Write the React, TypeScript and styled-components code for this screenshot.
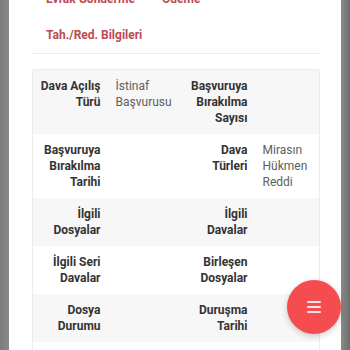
import { Fragment } from 'react';
import { createGlobalStyle, styled } from 'styled-components';

const GlobalStyle = createGlobalStyle`
  html, body {
    margin: 0;
    padding: 0;
    height: 100%;
    overflow: hidden;
    background: #7a7a7a;
    font-family: Roboto, "Liberation Sans", sans-serif;
  }
`;

type Cell = { label: string; value?: string };

const rows: [Cell, Cell][] = [
  [
    { label: 'Dava Açılış Türü', value: 'İstinaf Başvurusu' },
    { label: 'Başvuruya Bırakılma Sayısı' },
  ],
  [
    { label: 'Başvuruya Bırakılma Tarihi' },
    { label: 'Dava Türleri', value: 'Mirasın Hükmen Reddi' },
  ],
  [{ label: 'İlgili Dosyalar' }, { label: 'İlgili Davalar' }],
  [{ label: 'İlgili Seri Davalar' }, { label: 'Birleşen Dosyalar' }],
  [{ label: 'Dosya Durumu' }, { label: 'Duruşma Tarihi' }],
  [{ label: 'İlgili Kişi' }, { label: 'Ücret' }],
];

const links = ['Evrak Gönderme', 'Ödeme', 'Tah./Red. Bilgileri'];

const App = () => {
  return (
    <>
      <GlobalStyle />
      <Backdrop>
        <Modal>
          <Content>
            <LinkGrid>
              {links.map((l) => (
                <TabLink key={l}>{l}</TabLink>
              ))}
            </LinkGrid>
            <Divider />
            <InfoTable>
              <colgroup>
                <col style={{ width: 76 }} />
                <col style={{ width: 77 }} />
                <col style={{ width: 70 }} />
                <col />
              </colgroup>
              <tbody>
                {rows.map((r, i) => (
                  <Row key={i} $striped={i % 2 === 0}>
                    {r.map((c, j) => (
                      <Fragment key={j}>
                        <Label>{c.label}</Label>
                        <Value>{c.value}</Value>
                      </Fragment>
                    ))}
                  </Row>
                ))}
              </tbody>
            </InfoTable>
          </Content>
        </Modal>
        <Fab aria-label="menu">
          <MenuIcon />
        </Fab>
      </Backdrop>
    </>
  );
};

const MenuIcon = () => (
  <svg width="16" height="14" viewBox="0 0 16 14" fill="none">
    <rect x="1" y="1" width="14" height="2" rx="1" fill="#fbe3e3" />
    <rect x="1" y="6" width="14" height="2" rx="1" fill="#fbe3e3" />
    <rect x="1" y="11" width="14" height="2" rx="1" fill="#fbe3e3" />
  </svg>
);

export default App;

const Backdrop = styled.div`
  position: relative;
  height: 350px;
  padding: 0 9px;
  box-sizing: border-box;
  background: linear-gradient(to right, #7c7c7c 0, #8a8a8a 9px, #8a8a8a 341px, #6e6e6e 350px);
`;

const Modal = styled.div`
  background: #ffffff;
  height: 100%;
  overflow: hidden;
`;

const Content = styled.div`
  margin-top: -19px;
  padding: 0 21px 0 23px;
`;

const LinkGrid = styled.div`
  display: grid;
  grid-template-columns: 116px 116px;
  row-gap: 20px;
  padding: 10px 0 10px 14px;
`;

const TabLink = styled.a`
  font-size: 12px;
  font-weight: 700;
  line-height: 16px;
  color: #bc4a53;
  white-space: nowrap;
`;

const Divider = styled.hr`
  border: none;
  border-top: 1px solid #ececec;
  margin: 0 0 15px;
`;

const InfoTable = styled.table`
  width: 288px;
  table-layout: fixed;
  border-collapse: collapse;
  border: 1px solid #ececec;
`;

const Row = styled.tr<{ $striped: boolean }>`
  background: ${({ $striped }) => ($striped ? '#f7f7f7' : '#ffffff')};
`;

const Label = styled.td`
  padding: 8px 8px 8px 4px;
  font-size: 12px;
  font-weight: 700;
  line-height: 16px;
  color: #333333;
  text-align: right;
  vertical-align: top;
`;

const Value = styled.td`
  padding: 8px 7px;
  font-size: 12px;
  line-height: 16px;
  color: #606060;
  text-align: left;
  vertical-align: top;
`;

const Fab = styled.button`
  position: absolute;
  left: 287px;
  top: 280px;
  width: 54px;
  height: 54px;
  border: none;
  border-radius: 50%;
  background: #f44c4f;
  display: flex;
  align-items: center;
  justify-content: center;
  box-shadow: 0 2px 6px rgba(0, 0, 0, 0.2);
  padding: 0;
`;
